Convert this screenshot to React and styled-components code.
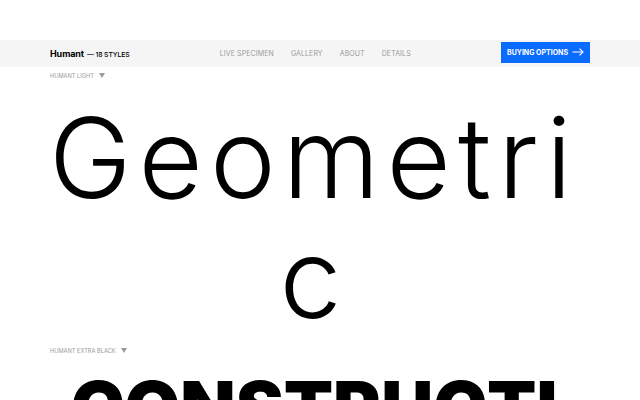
import React from "react"
import styled, { createGlobalStyle } from "styled-components"

const Global = createGlobalStyle`
  html, body {
    margin: 0;
    padding: 0;
    background: #fff;
    overflow: hidden;
  }
  body {
    font-family: "Inter", "Noto Sans", sans-serif;
    color: #000;
  }
`

const Page = styled.div`
  width: 640px;
  height: 400px;
  overflow: hidden;
  padding-top: 40px;
  box-sizing: border-box;
`

const Header = styled.header`
  height: 27px;
  background: #f5f5f5;
  display: flex;
  align-items: center;
  justify-content: space-between;
  padding: 0 50px;
`

const Logo = styled.div`
  display: flex;
  align-items: baseline;
  gap: 3px;
  font-size: 9px;
  font-weight: 700;
  letter-spacing: -0.1px;

  span {
    font-size: 6.8px;
    font-weight: 500;
  }
`

const Nav = styled.nav`
  display: flex;
  gap: 17px;
`

const NavLink = styled.a`
  font-size: 7px;
  color: #9a9a9a;
  text-transform: uppercase;
  letter-spacing: 0.1px;
  text-decoration: none;
`

const BuyButton = styled.button`
  height: 21px;
  width: 89px;
  background: #0a6cff;
  border: none;
  color: #fff;
  font-family: "Inter", sans-serif;
  font-size: 7px;
  font-weight: 700;
  display: flex;
  align-items: center;
  justify-content: center;
  gap: 4px;
  padding: 0;
  margin-top: -3px;
`

const Section = styled.section`
  padding: 0 50px;
`

const StyleLabel = styled.div`
  display: flex;
  align-items: center;
  gap: 5px;
  height: 16px;
  font-size: 5.7px;
  color: #9a9a9a;
  text-transform: uppercase;
  margin-top: ${p => p.$top || 0}px;
`

const Caret = styled.span`
  width: 0;
  height: 0;
  border-left: 3.5px solid transparent;
  border-right: 3.5px solid transparent;
  border-top: 5px solid #9a9a9a;
`

const Specimen = styled.div`
  font-family: "Inter", sans-serif;
  font-size: ${p => p.$size}px;
  line-height: ${p => p.$line}px;
  font-weight: ${p => p.$weight};
  letter-spacing: ${p => p.$spacing}px;
  text-align: center;
  word-break: break-all;
  margin: ${p => p.$top}px ${p => p.$right || 0}px 0 ${p => p.$left || 0}px;
`

const Arrow = () => (
  <svg width="12" height="8" viewBox="0 0 12 8" fill="none">
    <path d="M0.5 4H11M7.5 0.7L11 4L7.5 7.3" stroke="#fff" strokeWidth="1.1" />
  </svg>
)

export default function App() {
  return (
    <>
      <Global />
      <Page>
        <Header>
          <Logo>
            Humant <span>— 18 STYLES</span>
          </Logo>
          <Nav>
            <NavLink>Live Specimen</NavLink>
            <NavLink>Gallery</NavLink>
            <NavLink>About</NavLink>
            <NavLink>Details</NavLink>
          </Nav>
          <BuyButton>
            BUYING OPTIONS <Arrow />
          </BuyButton>
        </Header>
        <Section>
          <StyleLabel $top={0}>
            Humant Light <Caret />
          </StyleLabel>
          <Specimen $size={111} $line={120} $weight={300} $spacing={7} $top={15} $left={-12}>
            Geometric
          </Specimen>
          <StyleLabel $top={4}>
            Humant Extra Black <Caret />
          </StyleLabel>
          <Specimen $size={72} $line={80} $weight={900} $spacing={0} $top={9} $right={12}>
            CONSTRUCTION
          </Specimen>
        </Section>
      </Page>
    </>
  )
}
